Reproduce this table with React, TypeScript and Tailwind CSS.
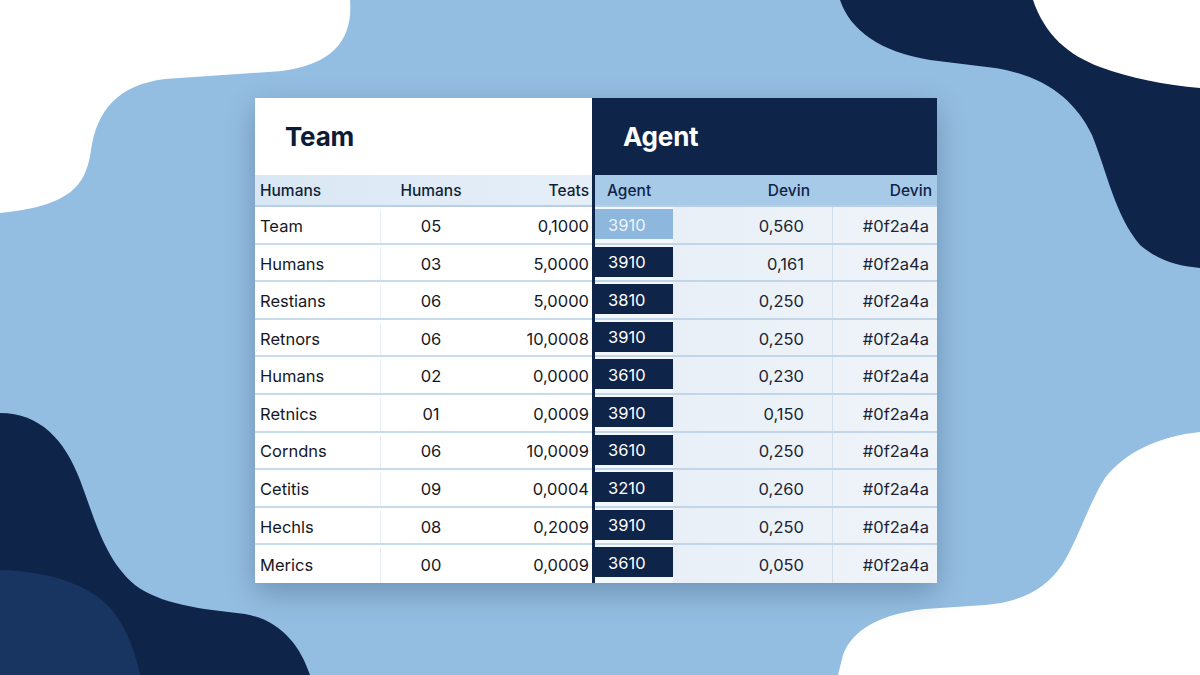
const NAVY = "#0f2449";

const teamRows = [
  ["Team", "05", "0,1000"],
  ["Humans", "03", "5,0000"],
  ["Restians", "06", "5,0000"],
  ["Retnors", "06", "10,0008"],
  ["Humans", "02", "0,0000"],
  ["Retnics", "01", "0,0009"],
  ["Corndns", "06", "10,0009"],
  ["Cetitis", "09", "0,0004"],
  ["Hechls", "08", "0,2009"],
  ["Merics", "00", "0,0009"],
];

const agentRows = [
  ["3910", "0,560"],
  ["3910", "0,161"],
  ["3810", "0,250"],
  ["3910", "0,250"],
  ["3610", "0,230"],
  ["3910", "0,150"],
  ["3610", "0,250"],
  ["3210", "0,260"],
  ["3910", "0,250"],
  ["3610", "0,050"],
];

function Blobs() {
  return (
    <svg className="absolute inset-0" width="1200" height="675" viewBox="0 0 1200 675">
      {/* top-left white */}
      <path d="M0,0 L350,0 C353,38 335,64 282,71 L165,79 C118,85 97,110 91,150 C86,186 70,206 0,213 Z" fill="#ffffff" />
      {/* top-right navy */}
      <path
        d="M840,0 C850,30 880,52 930,60 L995,68 C1045,76 1075,100 1092,135 C1108,175 1115,215 1140,245 C1160,262 1180,266 1200,268 L1200,0 Z"
        fill={NAVY}
      />
      {/* top-right white corner */}
      <path d="M1033,0 C1045,35 1068,55 1100,67 C1130,78 1165,85 1200,88 L1200,0 Z" fill="#ffffff" />
      {/* bottom-left navy */}
      <path
        d="M0,413 C40,413 65,440 80,480 C95,520 105,560 135,585 C160,604 200,609 245,614 C280,620 300,645 310,675 L0,675 Z"
        fill={NAVY}
      />
      <path d="M0,570 C50,571 90,585 112,610 C128,630 136,655 140,675 L0,675 Z" fill="#183461" />
      {/* bottom-right white */}
      <path
        d="M1200,432 C1160,436 1125,452 1105,478 C1088,505 1078,540 1062,565 C1045,590 1020,602 985,605 L925,609 C880,614 852,630 843,655 L838,675 L1200,675 Z"
        fill="#ffffff"
      />
    </svg>
  );
}

export default function App() {
  return (
    <div
      className="relative w-[1200px] h-[675px] overflow-hidden bg-[#94bee1]"
      style={{ fontFamily: "Inter, 'Noto Sans', sans-serif" }}
    >
      <Blobs />

      <div className="relative pt-[98px] pl-[255px]">
        <div className="flex w-[682px] shadow-[0_10px_28px_rgba(15,36,73,0.28)]">
          {/* Team side */}
          <div className="w-[337px] flex flex-col bg-white">
            <div className="h-[77px] flex items-center pl-[30px]">
              <h1 className="text-[26px] font-bold text-[#0d1b36] tracking-[-0.2px]">Team</h1>
            </div>
            <div className="h-[32px] flex items-center pt-[2px] text-[15.5px] font-medium text-[#0f1f3a] bg-gradient-to-r from-[#d9e7f4] to-[#e6eff8] border-b-2 border-[#b8cfe5]">
              <div className="w-[126px] pl-[5px]">Humans</div>
              <div className="w-[100px] text-center">Humans</div>
              <div className="flex-1 text-right pr-[3px]">Teats</div>
            </div>
            {teamRows.map((r, i) => (
              <div
                key={i}
                className="h-[37.6px] flex pt-[3px] text-[16.5px] text-[#16181f] border-b-2 border-[#c8dbec] last:border-b-0"
              >
                <div className="w-[126px] pl-[5px] flex items-center border-r border-[#e6edf4]">{r[0]}</div>
                <div className="w-[100px] flex items-center justify-center">{r[1]}</div>
                <div className="flex-1 flex items-center justify-end pr-[3px]">{r[2]}</div>
              </div>
            ))}
          </div>

          {/* Agent side */}
          <div className="w-[345px] flex flex-col bg-[#eaf0f7]">
            <div className="h-[77px] flex items-center pl-[31px] bg-[#0f2449]">
              <h1 className="text-[26px] font-bold text-white tracking-[-0.2px]">Agent</h1>
            </div>
            <div className="flex-1 flex flex-col border-l-[3px] border-[#0f2449]">
              <div className="h-[32px] flex items-center pt-[2px] text-[15.5px] font-medium text-[#0f2449] bg-[#a7cae8] border-b-2 border-[#b8cfe5]">
                <div className="w-[78px] pl-[12px]">Agent</div>
                <div className="w-[160px] text-right pr-[23px]">Devin</div>
                <div className="flex-1 text-right pr-[5px]">Devin</div>
              </div>
              {agentRows.map((r, i) => (
                <div
                  key={i}
                  className="h-[37.6px] flex text-[16.5px] text-[#1b2433] border-b-2 border-[#c3d6e9] last:border-b-0 bg-gradient-to-r from-[#e6eef6] to-[#eff4f9]"
                >
                  <div className="w-[78px] flex flex-col bg-[#f4f8fb]">
                    <div
                      className={
                        i === 0
                          ? "h-[30px] mt-[2px] flex items-center pt-[2px] pl-[13px] bg-[#8db7dd] text-[#eef4fa]"
                          : "h-[30px] mt-[2px] flex items-center pt-[2px] pl-[13px] bg-[#0f2449] text-white"
                      }
                    >
                      {r[0]}
                    </div>
                  </div>
                  <div className="w-[160px] flex items-center justify-end pt-[3px] pr-[28px] border-r border-[#d3dfeb]">
                    {r[1]}
                  </div>
                  <div className="flex-1 flex items-center justify-end pt-[3px] pr-[8px]">#0f2a4a</div>
                </div>
              ))}
            </div>
          </div>
        </div>
      </div>
    </div>
  );
}
